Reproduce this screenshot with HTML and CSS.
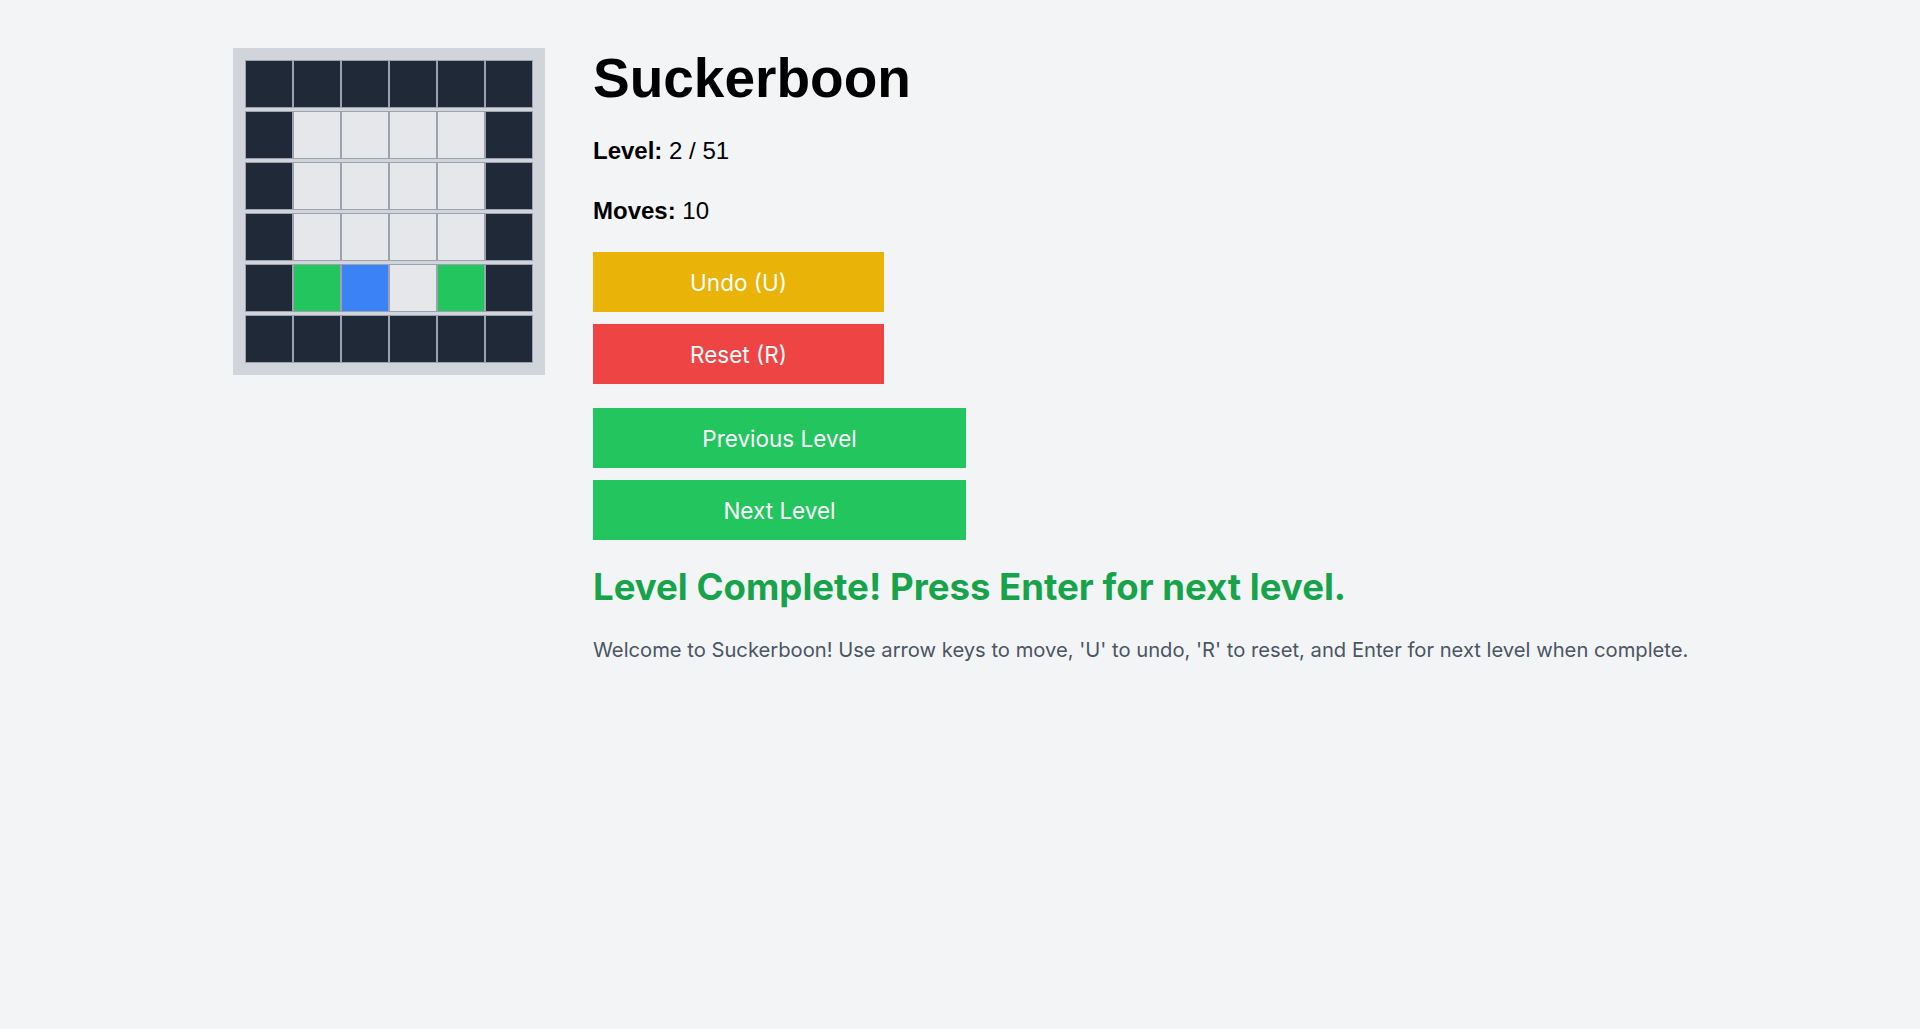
FILE: index.html
```html
<!DOCTYPE html>
<html lang="en">
<head>
<meta charset="utf-8">
<title>Suckerboon</title>
<link rel="stylesheet" href="styles.css">
</head>
<body>
<div class="page">
  <div class="board">
    <div class="cell wall"></div><div class="cell wall"></div><div class="cell wall"></div><div class="cell wall"></div><div class="cell wall"></div><div class="cell wall"></div>
    <div class="cell wall"></div><div class="cell floor"></div><div class="cell floor"></div><div class="cell floor"></div><div class="cell floor"></div><div class="cell wall"></div>
    <div class="cell wall"></div><div class="cell floor"></div><div class="cell floor"></div><div class="cell floor"></div><div class="cell floor"></div><div class="cell wall"></div>
    <div class="cell wall"></div><div class="cell floor"></div><div class="cell floor"></div><div class="cell floor"></div><div class="cell floor"></div><div class="cell wall"></div>
    <div class="cell wall"></div><div class="cell goal"></div><div class="cell player"></div><div class="cell floor"></div><div class="cell goal"></div><div class="cell wall"></div>
    <div class="cell wall"></div><div class="cell wall"></div><div class="cell wall"></div><div class="cell wall"></div><div class="cell wall"></div><div class="cell wall"></div>
  </div>
  <div class="panel">
    <h1 class="title">Suckerboon</h1>
    <p class="stat"><strong>Level:</strong> 2 / 51</p>
    <p class="stat"><strong>Moves:</strong> 10</p>
    <div class="btn-group narrow">
      <button class="btn undo">Undo (U)</button>
      <button class="btn reset">Reset (R)</button>
    </div>
    <div class="btn-group wide">
      <button class="btn nav">Previous Level</button>
      <button class="btn nav">Next Level</button>
    </div>
    <h2 class="status">Level Complete! Press Enter for next level.</h2>
    <p class="help">Welcome to Suckerboon! Use arrow keys to move, 'U' to undo, 'R' to reset, and Enter for next level when complete.</p>
  </div>
</div>
</body>
</html>
```
FILE: styles.css
```css
html, body {
  margin: 0;
  padding: 0;
  background: #f3f4f6;
}
body {
  font-family: "Liberation Sans", Arial, sans-serif;
  color: #000;
}
.page {
  width: 1454px;
  margin: 0 auto;
  padding-top: 48px;
  display: flex;
  align-items: flex-start;
  gap: 48px;
}
.board {
  flex-shrink: 0;
  background: #d1d5db;
  padding: 12px;
  display: grid;
  grid-template-columns: repeat(6, 48px);
  grid-auto-rows: 48px;
  row-gap: 3px;
}
.cell {
  box-sizing: border-box;
  border: 1px solid #9ca3af;
}
.wall { background: #1f2937; }
.floor { background: #e5e7eb; }
.goal { background: #22c55e; }
.player { background: #3b82f6; }

.panel {
  display: flex;
  flex-direction: column;
  align-items: flex-start;
}
.title {
  margin: 0;
  font-size: 55px;
  font-weight: 700;
  line-height: 61px;
  height: 61px;
  margin-bottom: 24px;
}
.stat {
  margin: 0 0 24px;
  font-size: 24px;
  line-height: 36px;
}
.stat strong { font-weight: 700; }
.stat + .btn-group { margin-top: -1px; }
.btn-group {
  display: flex;
  flex-direction: column;
  gap: 12px;
  margin-bottom: 24px;
}
.btn {
  border: none;
  color: #fff;
  font-family: Inter, "Liberation Sans", sans-serif;
  font-size: 22.5px;
  height: 60px;
  padding: 0;
  cursor: pointer;
}
.narrow .btn { width: 291px; }
.wide .btn { width: 373px; }
.undo { background: #eab308; }
.reset { background: #ef4444; }
.nav { background: #22c55e; }
.status {
  margin: 0;
  font-family: Inter, "Liberation Sans", sans-serif;
  font-weight: 700;
  font-size: 36.6px;
  line-height: 46px;
  color: #16a34a;
}
.help {
  margin: 26px 0 0;
  font-family: Inter, "Liberation Sans", sans-serif;
  font-size: 20.2px;
  line-height: 28px;
  color: #4b5563;
  white-space: nowrap;
}
```
